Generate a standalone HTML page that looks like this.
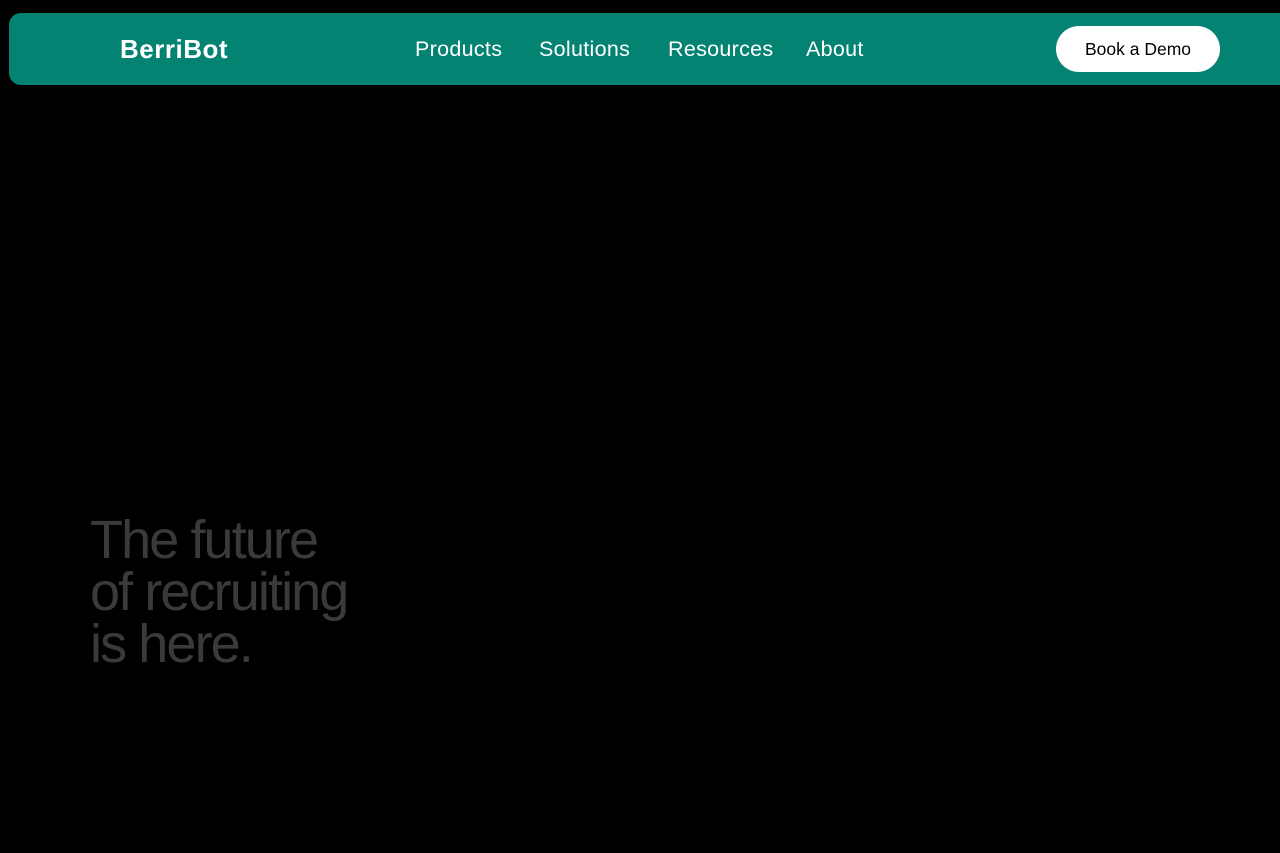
<!DOCTYPE html>
<html><head><style>
body{margin:0;background:#000;width:1280px;height:853px;overflow:hidden;font-family:"Liberation Sans",sans-serif;position:relative}
.nav{position:absolute;left:9px;top:13px;width:1290px;height:72px;background:#048373;border-radius:12px}
.logo{position:absolute;left:120px;top:34px;color:#fff;font-weight:bold;font-size:26px;letter-spacing:0.5px}
.link{position:absolute;top:37px;color:#fff;font-size:21.5px;letter-spacing:0.3px}
.btn{position:absolute;left:1056px;top:26px;width:164px;height:46px;background:#fff;border-radius:23px;color:#000;font-size:17.5px;text-align:center;line-height:46px}
h1{position:absolute;left:90px;top:514px;margin:0;font-weight:normal;font-size:54px;line-height:52px;color:#3a3a3a;letter-spacing:-1.9px}
</style></head><body>
<div class="nav"></div>
<div class="logo">BerriBot</div>
<div class="link" style="left:415px">Products</div>
<div class="link" style="left:539px">Solutions</div>
<div class="link" style="left:668px">Resources</div>
<div class="link" style="left:806px">About</div>
<div class="btn">Book a Demo</div>
<h1>The future<br>of recruiting<br>is here.</h1>
</body></html>
